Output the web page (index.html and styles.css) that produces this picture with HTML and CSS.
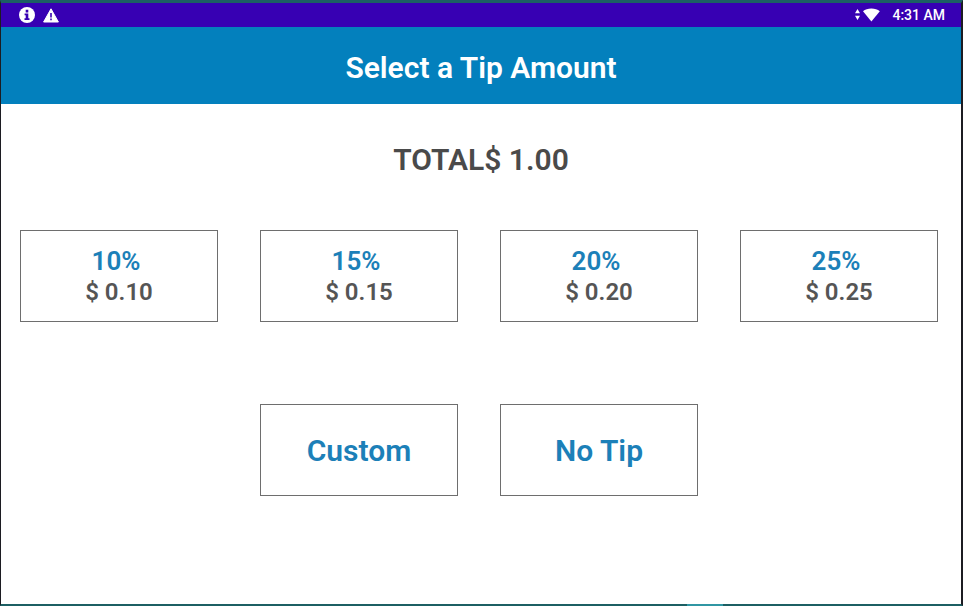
FILE: index.html
```html
<!DOCTYPE html>
<html lang="en">
<head>
    <meta charset="UTF-8">
    <meta name="viewport" content="width=device-width, initial-scale=1.0">
    <title>Select a Tip Amount</title>
    <link rel="stylesheet" href="styles.css">
</head>
<body>
    <div class="screen">
        <div class="status-bar">
            <div class="status-icons">
                <svg width="16" height="16" viewBox="0 0 16 16" aria-hidden="true">
                    <circle cx="8" cy="8" r="8" fill="#fff"/>
                    <path d="M6.7 2.800h2.600v2.600H6.700zM5.600 6.600h3.700v4.600h1.200v1.800H5.500v-1.800h1.200V8.300H5.600z" fill="#3700b3"/>
                </svg>
                <svg width="16" height="15" viewBox="0 0 16 15" aria-hidden="true">
                    <path d="M8 .8 15.4 14H.6z" fill="#fff" stroke="#fff" stroke-width="1" stroke-linejoin="round"/>
                    <path d="M7.2 5h1.6v4.400H7.200zM7.200 10.600h1.600v1.700H7.200z" fill="#3700b3"/>
                </svg>
            </div>
            <div class="status-info">
                <svg width="25" height="14" viewBox="0 0 25 14" aria-hidden="true">
                    <path d="M2.5 1 5 5.2H0zM2.5 12 5 7.8H0z" fill="#fff"/>
                    <path d="M8 3.2C10 1.4 13 .5 16.4 .5S22.6 1.4 24.8 3.2L16.4 13.6z" fill="#fff"/>
                </svg>
                <span class="clock">4:31 AM</span>
            </div>
        </div>

        <header class="header">
            <h1>Select a Tip Amount</h1>
        </header>

        <main class="content">
            <p class="total">TOTAL$ 1.00</p>

            <div class="tip-grid">
                <button type="button" class="tip-button">
                    <span class="percent">10%</span>
                    <span class="amount">$ 0.10</span>
                </button>
                <button type="button" class="tip-button">
                    <span class="percent">15%</span>
                    <span class="amount">$ 0.15</span>
                </button>
                <button type="button" class="tip-button">
                    <span class="percent">20%</span>
                    <span class="amount">$ 0.20</span>
                </button>
                <button type="button" class="tip-button">
                    <span class="percent">25%</span>
                    <span class="amount">$ 0.25</span>
                </button>
                <button type="button" class="tip-button custom">Custom</button>
                <button type="button" class="tip-button">No Tip</button>
            </div>
        </main>
        <div class="edge-mark"></div>
    </div>
</body>
</html>
```
FILE: styles.css
```css
:root {
    --status-color: #3700b3;
    --primary-color: #0380bd;
    --link-color: #1c80b8;
    --text-color: #4a4a4a;
    --edge-color: #1c5f63;
}

* {
    margin: 0;
    padding: 0;
    box-sizing: border-box;
}

body {
    font-family: Roboto, sans-serif;
    font-weight: 600;
    color: var(--text-color);
    background: #fff;
}

.screen {
    position: relative;
    display: flex;
    flex-direction: column;
    min-height: 100vh;
    border: solid #1c1c22;
    border-width: 3px 2px 2px 1px;
    border-top-color: var(--edge-color);
    border-bottom-color: var(--edge-color);
}

.status-bar {
    display: flex;
    justify-content: space-between;
    align-items: center;
    height: 24px;
    padding: 0 16px 0 18px;
    background: var(--status-color);
    color: #fff;
}

.status-icons,
.status-info {
    display: flex;
    align-items: center;
}

.status-icons {
    gap: 8px;
}

.status-info {
    gap: 12px;
}

.clock {
    font-size: 14px;
    font-weight: 500;
}

.header {
    padding: 25px 16px 20px;
    background: var(--primary-color);
    color: #fff;
    text-align: center;
}

.header h1 {
    font-size: 30px;
    font-weight: 600;
    line-height: 32px;
}

.content {
    flex: 1;
    padding: 40px 0;
}

.total {
    margin-bottom: 54px;
    font-size: 30px;
    line-height: 32px;
    text-align: center;
}

.tip-grid {
    display: grid;
    grid-template-columns: repeat(4, 1fr);
    gap: 82px 42px;
    padding: 0 23px 0 19px;
}

.tip-button {
    display: flex;
    flex-direction: column;
    align-items: center;
    justify-content: center;
    min-height: 92px;
    border: 1px solid #6e6e6e;
    background: #fff;
    color: var(--link-color);
    font-family: inherit;
    font-size: 30px;
    font-weight: 600;
    cursor: pointer;
}

.tip-button.custom {
    grid-column: 2;
}

.percent {
    padding-right: 6px;
    font-size: 26px;
    line-height: 32px;
}

.amount {
    color: #555;
    font-size: 24px;
    line-height: 30px;
}

.edge-mark {
    position: absolute;
    bottom: -2px;
    left: 71%;
    width: 36px;
    height: 2px;
    margin-left: 4px;
    background: #3096a3;
}
```
